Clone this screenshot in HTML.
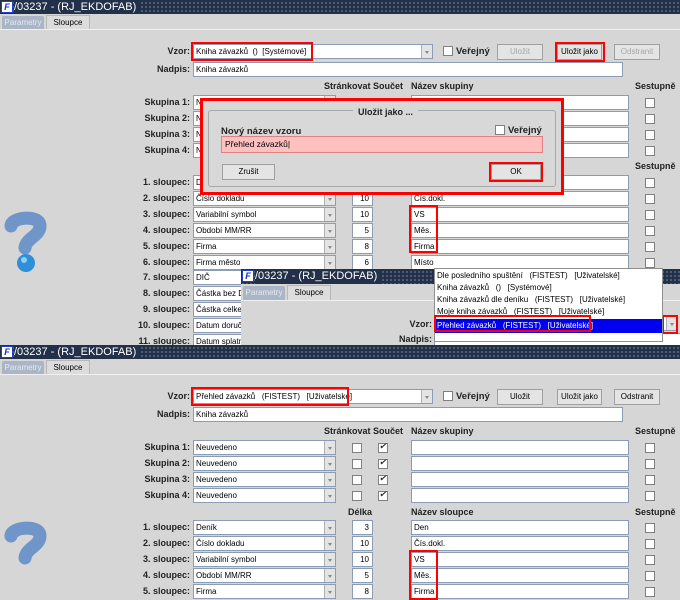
<!DOCTYPE html>
<html><head><meta charset="utf-8"><style>
*{margin:0;padding:0;box-sizing:border-box}
body{width:680px;height:600px;overflow:hidden;background:#d6d6d6;font-family:"Liberation Sans",Arial,sans-serif;font-size:9px;color:#000;position:relative}
.p{position:absolute;left:0;width:680px;background:#d6d6d6;overflow:hidden}
.p div,.p i,.p span{position:absolute}
.tb{left:0;top:0;height:14px;width:100%;background-color:#22304a;background-image:radial-gradient(#5a6a80 0.8px,transparent 1px);background-size:4px 4px;background-position:0 1px}
.tb .ic{left:1px;top:1px;width:12px;height:12px;background:#fff;border:1px solid #2040c0;color:#1030c0;font:bold italic 9px "Liberation Sans";line-height:10px;text-align:center}
.tb .tt{left:14px;top:0;color:#fff;font-size:11px;line-height:14px;background:#22304a;padding-right:4px}
.tab1{top:16px;left:2px;width:42px;height:14px;background:#aab6c6;color:#e6eaf0;font-size:8px;line-height:14px;text-align:center;border-radius:2px 2px 0 0}
.tab2{top:15px;left:46px;width:44px;height:15px;background:#dcdcdc;border:1px solid #b8b8b8;border-bottom:none;font-size:8px;line-height:13px;text-align:center}
.ln{top:29px;left:0;width:100%;height:1px;background:#f0f0f0}
.lb{left:0;width:190px;text-align:right;font-weight:bold;line-height:15px;color:#222}
.in{background:#fff;border:1px solid #8c9cb4;height:15px;line-height:13px;padding-left:2px;white-space:nowrap;overflow:hidden;font-size:8px}
.cb:after{content:"";position:absolute;right:0;top:0;width:10px;height:13px;background:#e4e4e4;border-left:1px solid #b0b0b0}
.cb:before{content:"";position:absolute;right:3px;top:6px;border:2px solid transparent;border-top:3px solid #888;z-index:1}
.ck{width:10px;height:10px;background:#fff;border:1px solid #808080}
.ckd:after{content:"✔";position:absolute;left:0;top:-3px;font-size:9px;color:#333}
.num{text-align:right;padding-right:3px}
.hd{font-weight:bold;line-height:12px;color:#222}
.bt{height:16px;background:#e4e4e4;border:1px solid #a0a0a0;text-align:center;line-height:14px;font-size:8px}
.dis{color:#a8a8a8}
.rb{border:2px solid #f00;z-index:3}
</style></head><body>

<!-- PANEL 1 -->
<div class="p" style="top:0;height:345px">
<div class="tb"><div class="ic">F</div><div class="tt">/03237 - (RJ_EKDOFAB)</div></div>
<div class="tab1">Parametry</div><div class="tab2">Sloupce</div><div class="ln"></div>

<div class="lb" style="top:44px">Vzor:</div>
<div class="in cb" style="top:44px;left:193px;width:240px">Kniha závazků &nbsp;() &nbsp;[Systémové]</div>
<div class="rb" style="top:42px;left:191px;width:122px;height:19px"></div>
<i class="ck" style="top:46px;left:443px"></i><div class="hd" style="top:46px;left:456px;font-size:9.5px">Veřejný</div>
<div class="bt dis" style="top:44px;left:497px;width:46px">Uložit</div>
<div class="bt" style="top:44px;left:557px;width:45px">Uložit jako</div>
<div class="rb" style="top:42px;left:555px;width:50px;height:20px"></div>
<div class="bt dis" style="top:44px;left:614px;width:46px">Odstranit</div>
<div class="lb" style="top:62px">Nadpis:</div>
<div class="in" style="top:62px;left:193px;width:430px">Kniha závazků</div>

<div class="hd" style="top:80px;left:324px">Stránkovat</div><div class="hd" style="top:80px;left:373px">Součet</div>
<div class="hd" style="top:80px;left:411px">Název skupiny</div><div class="hd" style="top:80px;left:635px">Sestupně</div>

<div class="lb" style="top:95px">Skupina 1:</div><div class="in cb" style="top:95px;left:193px;width:143px">Neuvedeno</div><div class="in" style="top:95px;left:411px;width:218px"></div><i class="ck" style="top:98px;left:645px"></i>
<div class="lb" style="top:111px">Skupina 2:</div><div class="in cb" style="top:111px;left:193px;width:143px">Neuvedeno</div><div class="in" style="top:111px;left:411px;width:218px"></div><i class="ck" style="top:114px;left:645px"></i>
<div class="lb" style="top:127px">Skupina 3:</div><div class="in cb" style="top:127px;left:193px;width:143px">Neuvedeno</div><div class="in" style="top:127px;left:411px;width:218px"></div><i class="ck" style="top:130px;left:645px"></i>
<div class="lb" style="top:143px">Skupina 4:</div><div class="in cb" style="top:143px;left:193px;width:143px">Neuvedeno</div><div class="in" style="top:143px;left:411px;width:218px"></div><i class="ck" style="top:146px;left:645px"></i>

<div class="hd" style="top:160px;left:635px">Sestupně</div>

<div class="lb" style="top:175px">1. sloupec:</div><div class="in cb" style="top:175px;left:193px;width:143px">Deník</div><div class="in num" style="top:175px;left:352px;width:21px">3</div><div class="in" style="top:175px;left:411px;width:218px">Den</div><i class="ck" style="top:178px;left:645px"></i>
<div class="lb" style="top:191px">2. sloupec:</div><div class="in cb" style="top:191px;left:193px;width:143px">Číslo dokladu</div><div class="in num" style="top:191px;left:352px;width:21px">10</div><div class="in" style="top:191px;left:411px;width:218px">Čís.dokl.</div><i class="ck" style="top:194px;left:645px"></i>
<div class="lb" style="top:207px">3. sloupec:</div><div class="in cb" style="top:207px;left:193px;width:143px">Variabilní symbol</div><div class="in num" style="top:207px;left:352px;width:21px">10</div><div class="in" style="top:207px;left:411px;width:218px">VS</div><i class="ck" style="top:210px;left:645px"></i>
<div class="lb" style="top:223px">4. sloupec:</div><div class="in cb" style="top:223px;left:193px;width:143px">Období MM/RR</div><div class="in num" style="top:223px;left:352px;width:21px">5</div><div class="in" style="top:223px;left:411px;width:218px">Měs.</div><i class="ck" style="top:226px;left:645px"></i>
<div class="lb" style="top:239px">5. sloupec:</div><div class="in cb" style="top:239px;left:193px;width:143px">Firma</div><div class="in num" style="top:239px;left:352px;width:21px">8</div><div class="in" style="top:239px;left:411px;width:218px">Firma</div><i class="ck" style="top:242px;left:645px"></i>
<div class="lb" style="top:255px">6. sloupec:</div><div class="in cb" style="top:255px;left:193px;width:143px">Firma město</div><div class="in num" style="top:255px;left:352px;width:21px">6</div><div class="in" style="top:255px;left:411px;width:218px">Místo</div><i class="ck" style="top:258px;left:645px"></i>
<div class="rb" style="top:205px;left:409px;width:29px;height:48px"></div>
<div class="lb" style="top:270px">7. sloupec:</div><div class="in" style="top:270px;left:193px;width:143px">DIČ</div>
<div class="lb" style="top:286px">8. sloupec:</div><div class="in" style="top:286px;left:193px;width:143px">Částka bez DPH</div>
<div class="lb" style="top:302px">9. sloupec:</div><div class="in" style="top:302px;left:193px;width:143px">Částka celkem</div>
<div class="lb" style="top:318px">10. sloupec:</div><div class="in" style="top:318px;left:193px;width:143px">Datum doručení</div>
<div class="lb" style="top:334px">11. sloupec:</div><div class="in" style="top:334px;left:193px;width:143px">Datum splatnosti</div>

<svg style="position:absolute;left:0;top:208px" width="50" height="68"><path d="M11 18 C11 9 40 6 40 18 C40 28 26 30 25 40" fill="none" stroke="#7095c8" stroke-width="13" stroke-linecap="round"/><circle cx="26" cy="55" r="9" fill="#2f8fd8"/><circle cx="24" cy="52" r="3" fill="#8fd0f4"/></svg>

<!-- dialog -->
<div style="top:98px;left:200px;width:364px;height:97px;border:3px solid #f00;background:#d8d8d8;z-index:5">
 <div style="top:9px;left:5px;width:348px;height:77px;border:1px solid #a8a8a8;border-radius:3px"></div>
 <div class="hd" style="top:5px;left:150px;background:#d8d8d8;padding:0 5px">Uložit jako ...</div>
 <div class="hd" style="top:25px;left:18px;font-size:9.5px">Nový název vzoru</div>
 <i class="ck" style="top:24px;left:292px"></i><div class="hd" style="top:24px;left:305px;font-size:9.5px">Veřejný</div>
 <div style="top:35px;left:18px;width:322px;height:17px;background:#ffc0c0;border:1px solid #e08080;line-height:15px;padding-left:3px;font-size:8.5px">Přehled závazků|</div>
 <div class="bt" style="top:63px;left:19px;width:53px">Zrušit</div>
 <div class="bt" style="top:63px;left:288px;width:50px">OK</div>
 <div class="rb" style="top:61px;left:286px;width:54px;height:20px"></div>
</div>
</div>

<!-- PANEL 2 -->
<div class="p" style="top:269px;left:241px;width:439px;height:76px">
<div class="tb" style="height:15px"><div class="ic">F</div><div class="tt" style="line-height:15px">/03237 - (RJ_EKDOFAB)</div></div>
<div class="tab1" style="top:17px">Parametry</div><div class="tab2" style="top:16px">Sloupce</div><div class="ln" style="top:31px"></div>
<div class="lb" style="top:48px;left:0;width:191px">Vzor:</div>
<div class="lb" style="top:63px;left:0;width:191px">Nadpis:</div>
<div class="in cb" style="top:47px;left:422px;width:15px;padding:0"></div>
<div class="rb" style="top:46px;left:421px;width:16px;height:19px"></div>
<div class="in" style="top:64px;left:193px;width:250px"></div>
</div>
<div style="position:absolute;top:268px;left:434px;width:229px;height:74px;background:#fff;border:1px solid #909090;font-size:8px;line-height:12px;padding-top:1px;z-index:5">
<div style="padding-left:2px">Dle posledního spuštění &nbsp; (FISTEST) &nbsp; [Uživatelské]</div>
<div style="padding-left:2px">Kniha závazků &nbsp; () &nbsp; [Systémové]</div>
<div style="padding-left:2px">Kniha závazků dle deníku &nbsp; (FISTEST) &nbsp; [Uživatelské]</div>
<div style="padding-left:2px">Moje kniha závazků &nbsp; (FISTEST) &nbsp; [Uživatelské]</div>
<div style="padding-left:2px;background:#0000f0;color:#fff;height:14px;line-height:14px;margin-top:1px">Přehled závazků &nbsp; (FISTEST) &nbsp; [Uživatelské]</div>
</div>
<div class="rb" style="position:absolute;top:315px;left:434px;width:157px;height:17px;z-index:6"></div>

<!-- PANEL 3 -->
<div class="p" style="top:345px;height:255px">
<div class="tb"><div class="ic">F</div><div class="tt">/03237 - (RJ_EKDOFAB)</div></div>
<div class="tab1">Parametry</div><div class="tab2">Sloupce</div><div class="ln"></div>

<div class="lb" style="top:44px">Vzor:</div>
<div class="in cb" style="top:44px;left:193px;width:240px">Přehled závazků &nbsp; (FISTEST) &nbsp; [Uživatelské]</div>
<div class="rb" style="top:42px;left:191px;width:158px;height:19px"></div>
<i class="ck" style="top:46px;left:443px"></i><div class="hd" style="top:46px;left:456px;font-size:9.5px">Veřejný</div>
<div class="bt" style="top:44px;left:497px;width:46px">Uložit</div>
<div class="bt" style="top:44px;left:557px;width:45px">Uložit jako</div>
<div class="bt" style="top:44px;left:614px;width:46px">Odstranit</div>
<div class="lb" style="top:62px">Nadpis:</div>
<div class="in" style="top:62px;left:193px;width:430px">Kniha závazků</div>

<div class="hd" style="top:80px;left:324px">Stránkovat</div><div class="hd" style="top:80px;left:373px">Součet</div>
<div class="hd" style="top:80px;left:411px">Název skupiny</div><div class="hd" style="top:80px;left:635px">Sestupně</div>

<div class="lb" style="top:95px">Skupina 1:</div><div class="in cb" style="top:95px;left:193px;width:143px">Neuvedeno</div><i class="ck" style="top:98px;left:352px"></i><i class="ck ckd" style="top:98px;left:378px"></i><div class="in" style="top:95px;left:411px;width:218px"></div><i class="ck" style="top:98px;left:645px"></i>
<div class="lb" style="top:111px">Skupina 2:</div><div class="in cb" style="top:111px;left:193px;width:143px">Neuvedeno</div><i class="ck" style="top:114px;left:352px"></i><i class="ck ckd" style="top:114px;left:378px"></i><div class="in" style="top:111px;left:411px;width:218px"></div><i class="ck" style="top:114px;left:645px"></i>
<div class="lb" style="top:127px">Skupina 3:</div><div class="in cb" style="top:127px;left:193px;width:143px">Neuvedeno</div><i class="ck" style="top:130px;left:352px"></i><i class="ck ckd" style="top:130px;left:378px"></i><div class="in" style="top:127px;left:411px;width:218px"></div><i class="ck" style="top:130px;left:645px"></i>
<div class="lb" style="top:143px">Skupina 4:</div><div class="in cb" style="top:143px;left:193px;width:143px">Neuvedeno</div><i class="ck" style="top:146px;left:352px"></i><i class="ck ckd" style="top:146px;left:378px"></i><div class="in" style="top:143px;left:411px;width:218px"></div><i class="ck" style="top:146px;left:645px"></i>

<div class="hd" style="top:161px;left:348px">Délka</div><div class="hd" style="top:161px;left:411px">Název sloupce</div><div class="hd" style="top:161px;left:635px">Sestupně</div>

<div class="lb" style="top:175px">1. sloupec:</div><div class="in cb" style="top:175px;left:193px;width:143px">Deník</div><div class="in num" style="top:175px;left:352px;width:21px">3</div><div class="in" style="top:175px;left:411px;width:218px">Den</div><i class="ck" style="top:178px;left:645px"></i>
<div class="lb" style="top:191px">2. sloupec:</div><div class="in cb" style="top:191px;left:193px;width:143px">Číslo dokladu</div><div class="in num" style="top:191px;left:352px;width:21px">10</div><div class="in" style="top:191px;left:411px;width:218px">Čís.dokl.</div><i class="ck" style="top:194px;left:645px"></i>
<div class="lb" style="top:207px">3. sloupec:</div><div class="in cb" style="top:207px;left:193px;width:143px">Variabilní symbol</div><div class="in num" style="top:207px;left:352px;width:21px">10</div><div class="in" style="top:207px;left:411px;width:218px">VS</div><i class="ck" style="top:210px;left:645px"></i>
<div class="lb" style="top:223px">4. sloupec:</div><div class="in cb" style="top:223px;left:193px;width:143px">Období MM/RR</div><div class="in num" style="top:223px;left:352px;width:21px">5</div><div class="in" style="top:223px;left:411px;width:218px">Měs.</div><i class="ck" style="top:226px;left:645px"></i>
<div class="lb" style="top:239px">5. sloupec:</div><div class="in cb" style="top:239px;left:193px;width:143px">Firma</div><div class="in num" style="top:239px;left:352px;width:21px">8</div><div class="in" style="top:239px;left:411px;width:218px">Firma</div><i class="ck" style="top:242px;left:645px"></i>
<div class="rb" style="top:205px;left:409px;width:29px;height:50px"></div>

<svg style="position:absolute;left:0;top:173px" width="50" height="82"><path d="M11 18 C11 9 40 6 40 18 C40 28 26 30 25 40" fill="none" stroke="#7095c8" stroke-width="13" stroke-linecap="round"/></svg>
</div>
</body></html>
